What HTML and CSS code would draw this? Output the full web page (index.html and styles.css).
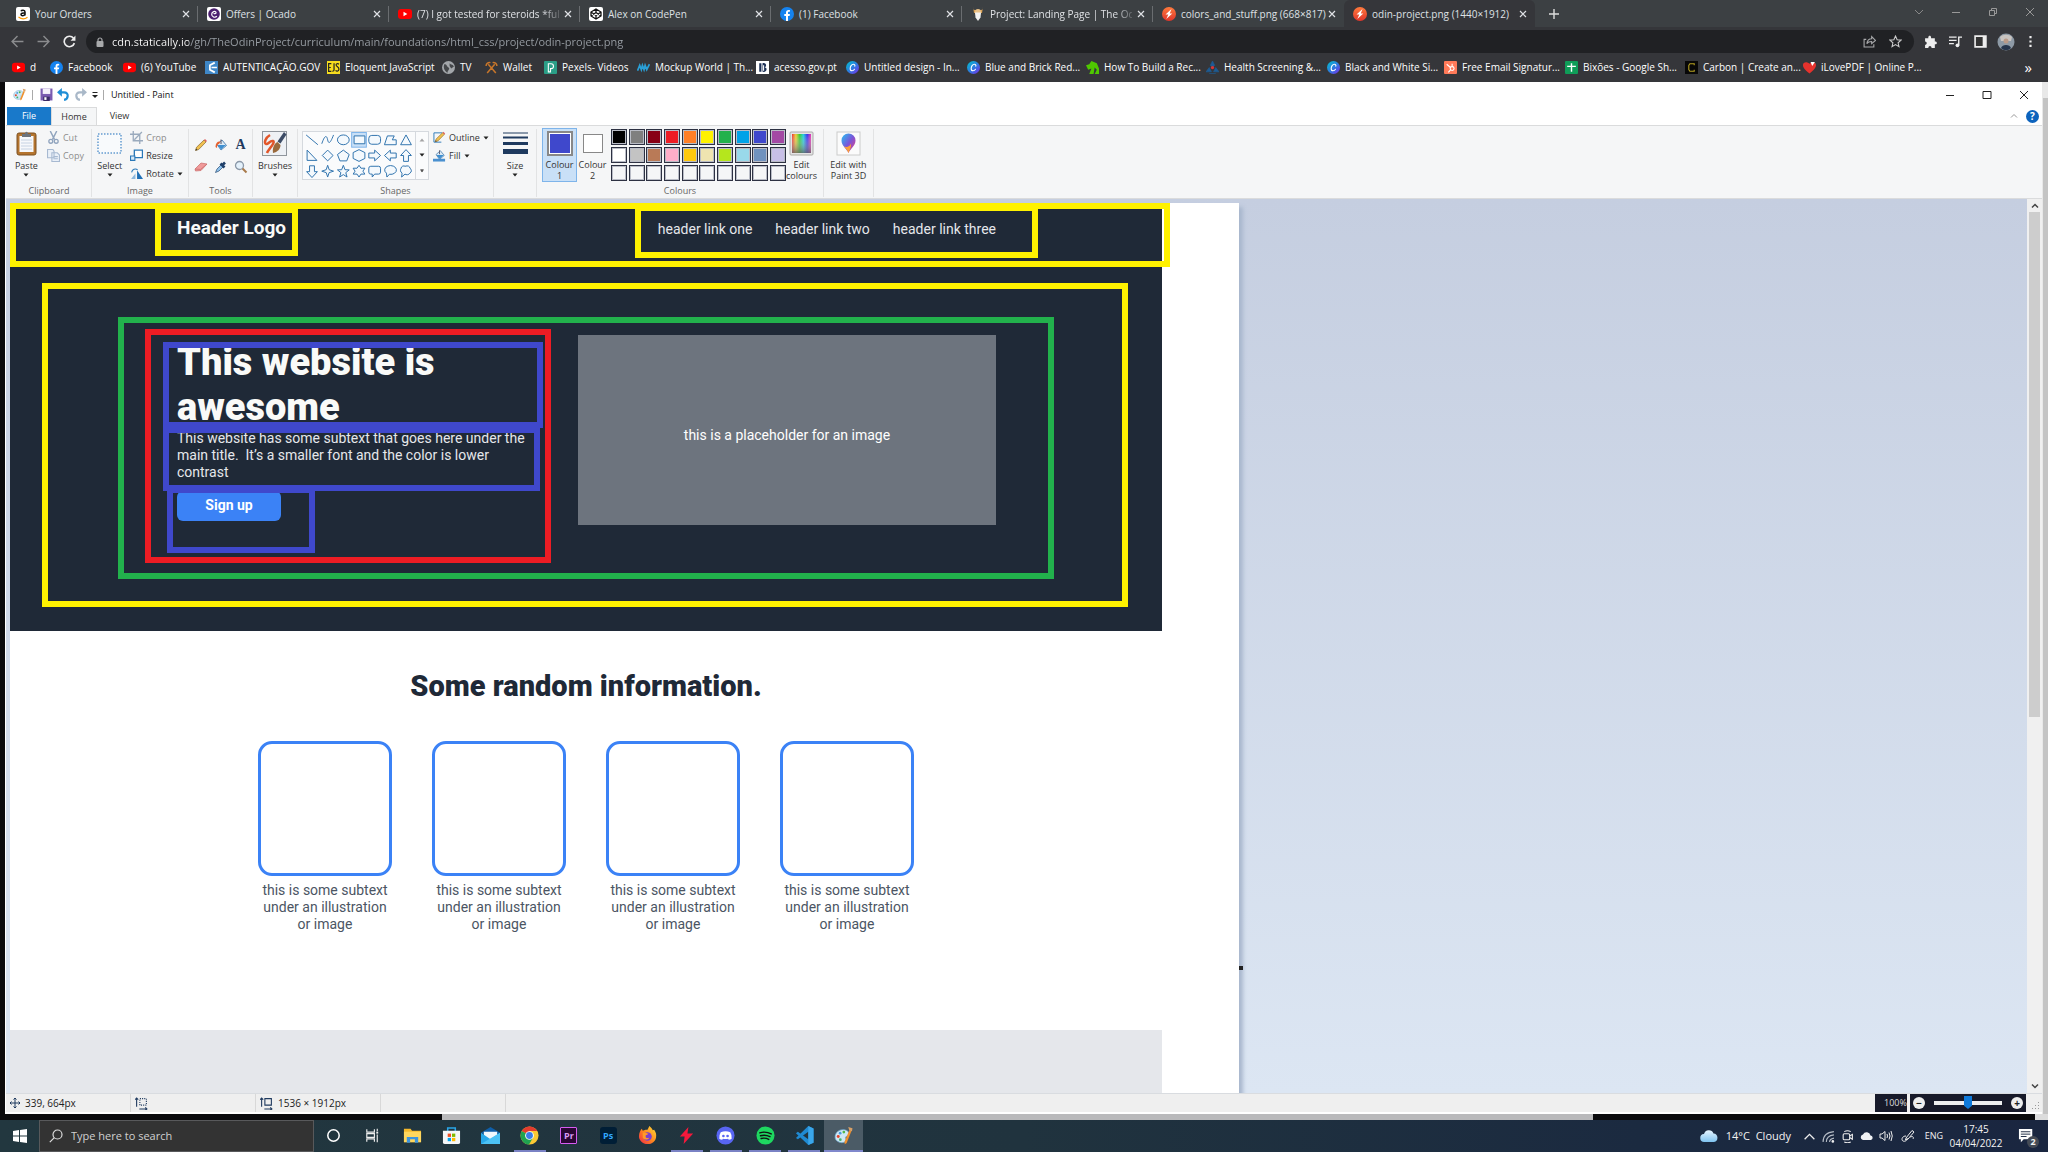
FILE: index.html
```html
<!DOCTYPE html>
<html lang="en">
<head>
<meta charset="utf-8">
<title>Untitled - Paint</title>
<link rel="stylesheet" href="styles.css">
</head>
<body>
<svg class="defs" aria-hidden="true">
  <defs>
    <linearGradient id="gCanva" x1="0" y1="0" x2="1" y2="1"><stop offset="0" stop-color="#00c4cc"/><stop offset=".5" stop-color="#2b7de0"/><stop offset="1" stop-color="#7d2ae8"/></linearGradient>
    <linearGradient id="gStat" x1="0" y1="0" x2="0" y2="1"><stop offset="0" stop-color="#ff7a3c"/><stop offset="1" stop-color="#e0352b"/></linearGradient>
    <linearGradient id="gRain"><stop offset="0" stop-color="#e33"/><stop offset=".2" stop-color="#ec3"/><stop offset=".4" stop-color="#3c3"/><stop offset=".6" stop-color="#2cd"/><stop offset=".8" stop-color="#33e"/><stop offset="1" stop-color="#e3a"/></linearGradient>
    <linearGradient id="gFade" x1="0" y1="0" x2="0" y2="1"><stop offset="0" stop-color="#fff" stop-opacity="0"/><stop offset="1" stop-color="#666" stop-opacity=".8"/></linearGradient>
    <linearGradient id="g3d" x1="0" y1="0" x2="1" y2="1"><stop offset="0" stop-color="#22c4f4"/><stop offset=".5" stop-color="#7a55d8"/><stop offset="1" stop-color="#f0407a"/></linearGradient>
    <linearGradient id="gFox" x1="1" y1="0" x2="0" y2="1"><stop offset="0" stop-color="#ffe03a"/><stop offset=".5" stop-color="#ff8a1e"/><stop offset="1" stop-color="#f0264a"/></linearGradient>
    <linearGradient id="gCloud" x1="0" y1="0" x2="0" y2="1"><stop offset="0" stop-color="#e6f5ff"/><stop offset="1" stop-color="#7fc3f0"/></linearGradient>
  </defs>
  <symbol id="yt" viewBox="0 0 14 14"><rect y="2" width="14" height="10" rx="3" fill="#f00"/><path d="M5.500 4.800v4.400L9.300 7z" fill="#fff"/></symbol>
  <symbol id="fb" viewBox="0 0 14 14"><circle cx="7" cy="7" r="7" fill="#1583f0"/><path d="M6 14V9H4.300V7H6V5.600C6 3.900 7 3 8.600 3l1.300.1v1.700H9c-.8 0-1 .4-1 1V7h1.900l-.3 2H8v5z" fill="#fff"/></symbol>
  <symbol id="canva" viewBox="0 0 14 14"><circle cx="7" cy="7" r="7" fill="url(#gCanva)"/><path d="M9.500 5.500c.3-1.200-.5-2-1.500-2C6 3.500 4.500 6 4.500 8c0 1.500.8 2.500 2 2.500 1.100 0 2-.6 2.600-1.600" fill="none" stroke="#fff" stroke-width="1.200" stroke-linecap="round"/></symbol>
  <symbol id="stat" viewBox="0 0 14 14"><circle cx="7" cy="7" r="7" fill="url(#gStat)"/><path d="M9.500 2 3.500 7.500H6.300L4.300 12l6-5.500H7.800z" fill="#fff"/></symbol>
  <symbol id="x" viewBox="0 0 8 8"><path d="M1 1l6 6M7 1 1 7" stroke="currentColor" stroke-width="1.200" fill="none"/></symbol>
  <symbol id="tri" viewBox="0 0 6 4"><path d="M.5.5h5L3 3.500z" fill="#222"/></symbol>
  <symbol id="palette" viewBox="0 0 18 18"><path d="M1 10.500C1 6 5 3 9.500 3.500c3.500.4 5.500 3 4.500 5-.7 1.400-2.500.8-3 2-.4 1.300.8 2.200.3 3.500-.6 1.800-4 2.200-6.300 1.300C2.600 14.500 1 13 1 10.500z" fill="#cfe8f5" stroke="#6fa9cf" stroke-width=".7"/><circle cx="4" cy="10" r="1.400" fill="#e0452c"/><circle cx="5.800" cy="6.800" r="1.300" fill="#4a9be0"/><circle cx="9.300" cy="5.800" r="1.300" fill="#52b848"/><circle cx="6" cy="13" r="1.300" fill="#46b36b"/><path d="M14.500 4l2 .7-4.500 11.300-1.800 1.300-.2-2.400z" fill="#f0902c"/><path d="M13.500 1l4 1.200L17 5l-2.500-.8z" fill="#d9a066"/></symbol>
  <symbol id="pencil" viewBox="0 0 14 14"><path d="M1.500 12.500l1-3.200L10 2l2 2-7.300 7.500z" fill="#f0c050" stroke="#8a6a30" stroke-width=".7"/><path d="M10 2l1-1 2 2-1 1z" fill="#e06060"/><path d="M1.500 12.500l.6-1.900 1.300 1.300z" fill="#333"/></symbol>
  <symbol id="bucket" viewBox="0 0 14 14"><path d="M3 6.500 8 2l4.500 5.500L7 12z" fill="#dbe9f5" stroke="#4a7fb0" stroke-width=".9"/><path d="M3.500 7h8.500L7 11.500z" fill="#3f8fd0"/><path d="M7 6V1.500" stroke="#556" fill="none"/></symbol>
</svg>

<div class="browser">
  <nav class="tabs" aria-label="Browser tabs">
    <div class="tab"><svg class="i14" viewBox="0 0 14 14"><rect width="14" height="14" rx="2" fill="#fff"/><path d="M5 4.300C5.500 3 9 2.800 9 5v3.500M9 6C6.500 5.800 5 6.200 5 7.600s3 1.500 4-.2" fill="none" stroke="#111" stroke-width="1.500"/><path d="M2.500 10c3 2.300 6.500 2.200 9 .2" fill="none" stroke="#f90" stroke-width="1.200"/></svg><span>Your Orders</span><button aria-label="Close tab"><svg class="i8"><use href="#x"/></svg></button></div>
    <div class="tab"><svg class="i14" viewBox="0 0 14 14"><rect width="14" height="14" rx="2" fill="#fff"/><circle cx="7" cy="7" r="5.800" fill="#4b1f6f"/><path d="M9.800 9.200C8.500 11 4.700 10.500 4.700 7.300 4.700 4.500 8.500 3.400 9 5.500c.2 1.500-2 1.600-2 .6" fill="none" stroke="#fff" stroke-width="1.200"/></svg><span>Offers | Ocado</span><button aria-label="Close tab"><svg class="i8"><use href="#x"/></svg></button></div>
    <div class="tab"><svg class="i14"><use href="#yt"/></svg><span class="long">(7) I got tested for steroids *full</span><button aria-label="Close tab"><svg class="i8"><use href="#x"/></svg></button></div>
    <div class="tab"><svg class="i14" viewBox="0 0 14 14"><rect width="14" height="14" rx="2" fill="#fff"/><path d="M7 2l5 3v4l-5 3-5-3V5zM2 5l5 3.500L12 5M2 9l5-3.500L12 9M7 2v3.500M7 8.500V12" fill="none" stroke="#111" stroke-width="1.300"/></svg><span>Alex on CodePen</span><button aria-label="Close tab"><svg class="i8"><use href="#x"/></svg></button></div>
    <div class="tab"><svg class="i14"><use href="#fb"/></svg><span>(1) Facebook</span><button aria-label="Close tab"><svg class="i8"><use href="#x"/></svg></button></div>
    <div class="tab"><svg class="i14" viewBox="0 0 14 14"><path d="M2 0c0 2 .5 3 2 3h6c1.500 0 2-1 2-3l-1 6H3z" fill="#d9a35a"/><circle cx="7" cy="5" r="3" fill="#e8c088"/><path d="M4 5.500h6l-.5 5L7 14l-2.500-3.500z" fill="#f2f2f2"/></svg><span class="long">Project: Landing Page | The Odin</span><button aria-label="Close tab"><svg class="i8"><use href="#x"/></svg></button></div>
    <div class="tab before-active"><svg class="i14"><use href="#stat"/></svg><span>colors_and_stuff.png (668×817)</span><button aria-label="Close tab"><svg class="i8"><use href="#x"/></svg></button></div>
    <div class="tab active"><svg class="i14"><use href="#stat"/></svg><span>odin-project.png (1440×1912)</span><button aria-label="Close tab"><svg class="i8"><use href="#x"/></svg></button></div>
    <button class="newtab" aria-label="New tab"><svg class="i10" viewBox="0 0 10 10"><path d="M5 0v10M0 5h10" stroke="#ddd" stroke-width="1.400"/></svg></button>
    <div class="winbtns">
      <button aria-label="Search tabs"><svg class="i10" viewBox="0 0 10 10"><path d="M1 3l4 4 4-4" fill="none" stroke="#888"/></svg></button>
      <button aria-label="Minimise"><svg class="i10" viewBox="0 0 10 10"><path d="M1 5.500h8" stroke="#999"/></svg></button>
      <button aria-label="Restore"><svg class="i10" viewBox="0 0 10 10"><path d="M1.500 3.500h5v5h-5zM3.500 3.500v-2h5v5h-2" fill="none" stroke="#999"/></svg></button>
      <button aria-label="Close"><svg class="i10" viewBox="0 0 10 10"><path d="M1 1l8 8M9 1 1 9" stroke="#999"/></svg></button>
    </div>
  </nav>
  <div class="toolbar">
    <button aria-label="Back"><svg class="i12" viewBox="0 0 12 12"><path d="M11.500 6H1M6 1 1 6l5 5" fill="none" stroke="#8b8c8e" stroke-width="1.300"/></svg></button>
    <button aria-label="Forward"><svg class="i12" viewBox="0 0 12 12"><path d="M.5 6H11M6 1l5 5-5 5" fill="none" stroke="#8b8c8e" stroke-width="1.300"/></svg></button>
    <button aria-label="Reload"><svg class="i12" viewBox="0 0 12 12"><path d="M10.500 7.500a4.800 4.800 0 1 1-.8-4.500" fill="none" stroke="#eee" stroke-width="1.500"/><path d="M11.500.5v4.700H7z" fill="#eee"/></svg></button>
    <div class="omnibox">
      <svg class="i10" viewBox="0 0 10 10"><rect x="1.500" y="4" width="7" height="6" rx="1" fill="#a8a9ab"/><path d="M3 4.500V3a2 2 0 0 1 4 0v1.500" fill="none" stroke="#a8a9ab" stroke-width="1.200"/></svg>
      <input type="text" aria-label="Address" value="cdn.statically.io/gh/TheOdinProject/curriculum/main/foundations/html_css/project/odin-project.png">
      <button aria-label="Share"><svg class="i12" viewBox="0 0 12 12"><path d="M3 4H1v7h9V8.500M3.500 8c.5-3 2-4.500 4.500-4.500V1.500L11.500 5 8 8V6C6 6 4.500 6.500 3.500 8z" fill="none" stroke="#a8a9ab"/></svg></button>
      <button aria-label="Bookmark"><svg class="i12" viewBox="0 0 12 12"><path d="M6 1l1.500 3.400 3.700.3-2.800 2.500.8 3.600L6 8.900l-3.200 1.900.8-3.600L.8 4.700l3.700-.3z" fill="none" stroke="#ccc"/></svg></button>
    </div>
    <div class="exts">
      <button aria-label="Extensions"><svg class="i12" viewBox="0 0 12 12"><path d="M1 3h3c-.5-3 3-3 2.500 0H10v3c2.500-.4 2.500 3 0 2.500V12H7c0-2.500-3-2.500-3 0H1V9c2 0 2-3 0-3z" fill="#eee"/></svg></button>
      <button aria-label="Media"><svg class="i12" viewBox="0 0 12 12"><path d="M0 2h7M0 5h7M0 8h4.500M9 9.500V2h3" fill="none" stroke="#eee" stroke-width="1.300"/><circle cx="7.800" cy="9.500" r="1.700" fill="#eee"/></svg></button>
      <button aria-label="Side panel"><svg class="i12" viewBox="0 0 12 12"><path d="M1 1h10v10H1z" fill="#333" stroke="#eee" stroke-width="1.500"/><path d="M8 1h3v10H8z" fill="#eee"/></svg></button>
      <button aria-label="Profile"><svg class="i18" viewBox="0 0 18 18"><circle cx="9" cy="9" r="8.500" fill="#8e9aa6"/><path d="M3 4c3-3 9-3 12 0l-1 4H4z" fill="#c9c4c0"/><circle cx="9" cy="8" r="2.500" fill="#b99a88"/><path d="M4 15c1-4 9-4 10 0-3 3-7 3-10 0z" fill="#27364d"/></svg></button>
      <button aria-label="Menu"><svg class="i12" viewBox="0 0 12 12"><path d="M6 1v2M6 5v2M6 9v2" stroke="#eee" stroke-width="2"/></svg></button>
    </div>
  </div>
  <nav class="bookmarks" aria-label="Bookmarks">
    <a href="#"><svg class="i12"><use href="#yt"/></svg>d</a>
    <a href="#"><svg class="i12"><use href="#fb"/></svg>Facebook</a>
    <a href="#"><svg class="i12"><use href="#yt"/></svg>(6) YouTube</a>
    <a href="#"><svg class="i12" viewBox="0 0 12 12"><rect width="12" height="12" fill="#3f87c8"/><path d="M9 1.500 4.500 4v4L9 10.500M6 6h5" fill="none" stroke="#fff" stroke-width="1.600"/></svg>AUTENTICAÇÃO.GOV</a>
    <a href="#"><svg class="i12" viewBox="0 0 12 12"><rect width="12" height="12" fill="#f7dc1e"/><path d="M4 2.500H1.500v7H4M1.500 6h2M6.500 2v6c0 1.500-1.500 1.500-1.500 1M11 3c-1-1-3-.5-2.500 1s2.800 1.500 2.500 3.700-2.500 1.800-3 .8" fill="none" stroke="#222" stroke-width="1.100"/></svg>Eloquent JavaScript</a>
    <a href="#"><svg class="i12" viewBox="0 0 12 12"><circle cx="6" cy="6" r="6" fill="#a3a6aa"/><path d="M2 3c3 0 2 2 4 3s-1 3-1 5C2 9 1 6 2 3zM7 1.500c0 2 3 1 4 3.500L8.500 7 7 4.500z" fill="#45474a"/></svg>TV</a>
    <a href="#"><svg class="i12" viewBox="0 0 12 12"><path d="M2 11l7-8M10 11 3 3M1 4.500C1 2 3 1 5 1.500M11 4.500C11 2 9 1 7 1.500" fill="none" stroke="#c8762a" stroke-width="1.400"/></svg>Wallet</a>
    <a href="#"><svg class="i12" viewBox="0 0 12 12"><rect width="12" height="12" rx="1" fill="#2b9e87"/><path d="M4 10V2.500h2.500a2 2 0 0 1 0 4.500H6v3z" fill="none" stroke="#fff"/></svg>Pexels- Videos</a>
    <a href="#"><svg class="i12" viewBox="0 0 12 12"><path d="M.5 9l2-5 1.500 4 1-4 1.500 4 1-4 1.500 4 2.500-5" fill="none" stroke="#2a9fd6" stroke-width="1.600"/></svg>Mockup World | Th...</a>
    <a href="#"><svg class="i12" viewBox="0 0 12 12"><rect width="12" height="12" fill="#fff"/><path d="M3 2h2v8H3zM6 2c4-1 4 3.500 2 4 3 0 2 5-2 4z" fill="#1b2f55"/><path d="M7 4v5" stroke="#fff"/></svg>acesso.gov.pt</a>
    <a href="#"><svg class="i12"><use href="#canva"/></svg>Untitled design - In...</a>
    <a href="#"><svg class="i12"><use href="#canva"/></svg>Blue and Brick Red...</a>
    <a href="#"><svg class="i12" viewBox="0 0 12 12"><path d="M0 4l3-1 2-3 5 2 2 5v5H8l2-4-2-2-1 6H3l2-5-3 1z" fill="#4fc800"/></svg>How To Build a Rec...</a>
    <a href="#"><svg class="i12" viewBox="0 0 12 12"><path d="M6 0l2 4-2 2-2-2zM0 10l3-4 2 4zM12 10 9 6l-2 4zM3 11.500h6" fill="#1e5b93" stroke="#1e5b93" stroke-width=".6"/><circle cx="6" cy="6" r="1.500" fill="#d33"/></svg>Health Screening &amp;...</a>
    <a href="#"><svg class="i12"><use href="#canva"/></svg>Black and White Si...</a>
    <a href="#"><svg class="i12" viewBox="0 0 12 12"><rect width="12" height="12" rx="1" fill="#ff7a59"/><circle cx="7.500" cy="7" r="1.800" fill="none" stroke="#fff"/><path d="M7.500 5V2.500M6 6 2.500 3M6 8.200 4 10.500" stroke="#fff"/></svg>Free Email Signatur...</a>
    <a href="#"><svg class="i12" viewBox="0 0 12 12"><rect width="12" height="12" rx="1" fill="#0f9d58"/><path d="M6 2v8M2 5h8" stroke="#fff" stroke-width="1.300"/></svg>Bixões - Google Sh...</a>
    <a href="#"><svg class="i12" viewBox="0 0 12 12"><rect width="12" height="12" fill="#080808"/><path d="M8.500 4V2.500h-4L3.500 4v4l1 1.500h4V8" fill="none" stroke="#b5a020"/></svg>Carbon | Create an...</a>
    <a href="#"><svg class="i12" viewBox="0 0 12 12"><path d="M6 11.500C0 7 0 5 0 3.500 0 1 3.500 0 6 2.500 8.500 0 12 1 12 3.500c0 1.500 0 3.500-6 8z" fill="#e5322d"/><path d="M7 1h4L8.500 4.500z" fill="#fff"/></svg>iLovePDF | Online P...</a>
    <button aria-label="More bookmarks">»</button>
  </nav>
</div>

<div class="desk">
<main class="paint">
  <header class="titlebar">
    <svg class="i12" ><use href="#palette"/></svg>
    <i class="sep"></i>
    <button aria-label="Save"><svg class="i12" viewBox="0 0 12 12"><path d="M.5.5h11v11H.5z" fill="#7a5bb0"/><path d="M2.500.5h7v5h-7z" fill="#f4f0fa"/><path d="M3 8h6v4H3z" fill="#3a2a66"/><path d="M4 8.500h2V11H4z" fill="#fff"/></svg></button>
    <button aria-label="Undo"><svg class="i12" viewBox="0 0 12 12"><path d="M2.500 4h4c5 0 4 6.500 0 7" fill="none" stroke="#1f8ed6" stroke-width="2"/><path d="M4.500 0v8L0 4z" fill="#1f8ed6"/></svg></button>
    <button aria-label="Redo"><svg class="i12" viewBox="0 0 12 12"><path d="M9.500 4h-4c-5 0-4 6.500 0 7" fill="none" stroke="#a9b8c8" stroke-width="2"/><path d="M7.500 0v8L12 4z" fill="#a9b8c8"/></svg></button>
    <button aria-label="Customise toolbar"><svg class="i8" viewBox="0 0 8 8"><path d="M1.500 1.500h5" stroke="#222"/><path d="M1 4h6L4 7z" fill="#222"/></svg></button>
    <i class="sep"></i>
    <h1 class="wintitle">Untitled - Paint</h1>
    <div class="paintbtns">
      <button aria-label="Minimise"><svg class="i10" viewBox="0 0 10 10"><path d="M1 5.500h8" stroke="#222"/></svg></button>
      <button aria-label="Maximise"><svg class="i10" viewBox="0 0 10 10"><path d="M1 1.500h8v7H1z" fill="none" stroke="#222"/></svg></button>
      <button aria-label="Close"><svg class="i10" viewBox="0 0 10 10"><path d="M1 1l8 8M9 1 1 9" stroke="#222"/></svg></button>
    </div>
  </header>
  <div class="ribbontabs">
    <button class="file">File</button><button class="home">Home</button><button class="view">View</button>
    <div class="help">
      <button aria-label="Collapse ribbon"><svg class="i8" viewBox="0 0 8 8"><path d="M1 5.500l3-3 3 3" fill="none" stroke="#999"/></svg></button>
      <button class="q" aria-label="Help">?</button>
    </div>
  </div>
  <div class="ribbon">
    <section class="group g-clip">
      <div class="body">
        <button class="big"><svg class="i25" viewBox="0 0 25 25"><rect x="3" y="2" width="19" height="22" rx="2" fill="#b5752e" stroke="#7d5122"/><path d="M5.500 5h14v16h-14z" fill="#f6f8fb"/><path d="M7 9h11M7 12h11M7 15h11M7 18h11" stroke="#c6d2e2"/><path d="M8 6V3h3c0-3 3-3 3 0h3v3z" fill="#6d737c"/></svg><span>Paste</span><svg class="tri"><use href="#tri"/></svg></button>
        <div class="smalls two">
          <button class="off"><svg class="i12" viewBox="0 0 12 12"><path d="M3 0l4 8M9 0 5 8" stroke="#8fa3bd" stroke-width="1.300"/><circle cx="3.500" cy="9.500" r="1.800" fill="none" stroke="#8fa3bd" stroke-width="1.200"/><circle cx="8.500" cy="9.500" r="1.800" fill="none" stroke="#8fa3bd" stroke-width="1.200"/></svg>Cut</button>
          <button class="off"><svg class="i12" viewBox="0 0 12 12"><path d="M.5.500h5l1 1.500v6h-6zM4.500 3.500h5l2 2v6h-7z" fill="#eaf0f8" stroke="#a7b9d1"/><path d="M6 7h4M6 9h4" stroke="#a7b9d1"/></svg>Copy</button>
        </div>
      </div><h2>Clipboard</h2>
    </section>
    <section class="group g-image">
      <div class="body">
        <button class="big"><svg class="i25" viewBox="0 0 25 25"><rect x="1" y="3" width="23" height="19" fill="#f8fafc" stroke="#1a6dbb" stroke-dasharray="1.500 1.500"/></svg><span>Select</span><svg class="tri"><use href="#tri"/></svg></button>
        <div class="smalls">
          <button class="off"><svg class="i12" viewBox="0 0 12 12"><path d="M3 0v9h9M0 3h9v9M4 8l7-7" fill="none" stroke="#9aaabd" stroke-width="1.200"/></svg>Crop</button>
          <button><svg class="i12" viewBox="0 0 12 12"><path d="M4 1h7.500v7H4z" fill="#fff" stroke="#2a78b8" stroke-width="1.200"/><path d="M.5 6.500h4v4h-4z" fill="#d7e9f8" stroke="#2a78b8"/></svg>Resize</button>
          <button><svg class="i12" viewBox="0 0 12 12"><path d="M6.500 11V3l5.500 8z" fill="#1f6fb5"/><path d="M5 11V6L1 11z" fill="#8db8dd"/><path d="M1.500 5C2 2 5 1 7 2.500" fill="none" stroke="#2a78b8"/></svg>Rotate<svg class="tri"><use href="#tri"/></svg></button>
        </div>
      </div><h2>Image</h2>
    </section>
    <section class="group g-tools">
      <div class="body tools">
        <button aria-label="Pencil"><svg class="i14"><use href="#pencil"/></svg></button>
        <button aria-label="Fill with colour"><svg class="i14" viewBox="0 0 14 14"><use href="#bucket"/><path d="M1.500 9c0-4 2-6 5-5.500L5 6C3.500 6 3 8 3 10z" fill="#e8602c"/></svg></button>
        <button aria-label="Text" class="letter">A</button>
        <button aria-label="Eraser"><svg class="i14" viewBox="0 0 14 14"><path d="M1 9l6-6 6 1-6 6.500-5.500.5z" fill="#f09a9a" stroke="#c86a6a" stroke-width=".7"/><path d="M1 9l5.500.5L13 4" fill="none" stroke="#c86a6a" stroke-width=".7"/></svg></button>
        <button aria-label="Colour picker"><svg class="i14" viewBox="0 0 14 14"><path d="M1.500 12.500 3 9l4-4 2 2-4 4z" fill="#8fc4ee" stroke="#3a5a80" stroke-width=".8"/><path d="M6.500 3.500l4 4M8.500 5 11 2.500" stroke="#20406a" stroke-width="2.600"/></svg></button>
        <button aria-label="Magnifier"><svg class="i14" viewBox="0 0 14 14"><circle cx="5.500" cy="5.500" r="4" fill="#e4f1fb" stroke="#8b98a8" stroke-width="1.300"/><path d="M8.500 8.500l4 4" stroke="#a87a4a" stroke-width="2"/></svg></button>
      </div><h2>Tools</h2>
    </section>
    <section class="group g-brush">
      <div class="body">
        <button class="big"><svg class="i25" viewBox="0 0 25 25"><rect x=".5" y=".5" width="24" height="24" fill="#eef1f5" stroke="#8f959c"/><path d="M8 4c-5 3-6 8-4 9s4-4 7-3-5 9-6 12" fill="none" stroke="#e2562a" stroke-width="2.500"/><path d="M22 1l2.500 2.500-6 9-3-2z" fill="#3d4c66"/><path d="M11 22c-1-6 2-10 4.500-11l3 3c0 4-3 7-7.500 8z" fill="#9a6a3c"/></svg><span>Brushes</span><svg class="tri"><use href="#tri"/></svg></button>
      </div>
    </section>
    <section class="group g-shapes">
      <div class="body">
        <div class="gallery">
          <svg class="shapes" viewBox="0 0 112 48" fill="#f4f9fd" stroke="#2f73ad">
            <rect x="48.500" y=".5" width="15" height="15" fill="#c9e0f7" stroke="#7eb4ea"/>
            <path d="M2 3l12 10"/><path d="M18 12c3-9 5-9 6-4s3 3 6-5" fill="none"/><ellipse cx="40" cy="8" rx="6" ry="5"/><path d="M51 4h11v8H51z"/><rect x="66" y="3.500" width="12" height="9" rx="3"/><path d="M85 4h7l-2 4h4v5H82z"/><path d="M104 3l5.500 10h-11z"/>
            <path d="M3 18.500V29h10z"/><path d="M24 18.500l5.500 5.500-5.500 5.500-5.500-5.500z"/><path d="M40 18.500l6 4.500-2.500 6.500h-7L34 23z"/><path d="M56 18l6 3v6l-6 3-6-3v-6z"/><path d="M66 21.500h6v-3l6 5.500-6 5.500v-3h-6z"/><path d="M94 21.500h-6v-3L82 24l6 5.500v-3h6z"/><path d="M101.500 30v-6h-3l5.500-6 5.500 6h-3v6z"/>
            <path d="M5.500 34.500v6h-3l5.500 6 5.500-6h-3v-6z"/><path d="M24 34l1.500 4.500L30 40l-4.500 1.500L24 46l-1.500-4.500L18 40l4.500-1.500z"/><path d="M40 34l1.700 4.500 4.300.2-3.500 2.800 1.300 4.500L40 43.500 36.200 46l1.300-4.500-3.500-2.800 4.300-.2z"/><path d="M56 34l2 3h4l-2 3 2 3h-4l-2 3-2-3h-4l2-3-2-3h4z"/><path d="M68 35h8q2 0 2 2v4q0 2-2 2h-4l-2.500 3v-3H68q-2 0-2-2v-4q0-2 2-2z"/><path d="M84 42a6 4.500 0 1 1 3 1.200L84.500 46z"/><path d="M99 37c0-2 3-3 4-2 3-1 5 0 5 2 2 1 2 4 0 5-1 2-4 2-5 1l-3.500 3 .5-4c-2-1-2-4-1-5z"/>
          </svg>
          <div class="scroller"><svg class="tri up"><use href="#tri"/></svg><svg class="tri"><use href="#tri"/></svg><svg class="tri" viewBox="0 0 6 6"><path d="M.5.5h5" stroke="#222"/><path d="M.5 2h5L3 5z" fill="#222"/></svg></div>
        </div>
        <div class="smalls two">
          <button><svg class="i12" viewBox="0 0 14 14"><path d="M1 2h9M1 2v10h8" fill="none" stroke="#2a78b8"/><use href="#pencil" x="1" y="0" width="13" height="13"/></svg>Outline<svg class="tri"><use href="#tri"/></svg></button>
          <button><svg class="i12" viewBox="0 0 14 14"><path d="M0 12h13" stroke="#4a90d0" stroke-width="3"/><use href="#bucket" width="14" height="13"/></svg>Fill<svg class="tri"><use href="#tri"/></svg></button>
        </div>
      </div><h2>Shapes</h2>
    </section>
    <section class="group g-size">
      <div class="body">
        <button class="big"><svg class="i25" viewBox="0 0 25 25"><path d="M0 2h25" stroke="#1f3a5f"/><path d="M0 6.500h25" stroke="#1f3a5f" stroke-width="2"/><path d="M0 12.500h25" stroke="#1f3a5f" stroke-width="3"/><path d="M0 20.500h25" stroke="#1f3a5f" stroke-width="5"/></svg><span>Size</span><svg class="tri"><use href="#tri"/></svg></button>
      </div>
    </section>
    <section class="group g-col">
      <div class="body">
        <button class="big col picked"><i class="chip c-blue large"></i><span>Colour<br>1</span></button>
        <button class="big col"><i class="chip c-white"></i><span>Colour<br>2</span></button>
        <div class="palette">
          <i class="c-black"></i><i class="c-grey"></i><i class="c-maroon"></i><i class="c-red"></i><i class="c-orange"></i><i class="c-yellow"></i><i class="c-green"></i><i class="c-sky"></i><i class="c-blue"></i><i class="c-purple"></i>
          <i class="c-white"></i><i class="c-silver"></i><i class="c-brown"></i><i class="c-pink"></i><i class="c-gold"></i><i class="c-cream"></i><i class="c-lime"></i><i class="c-aqua"></i><i class="c-steel"></i><i class="c-lilac"></i>
          <i></i><i></i><i></i><i></i><i></i><i></i><i></i><i></i><i></i><i></i>
        </div>
        <button class="big edit"><svg class="i25" viewBox="0 0 25 25"><rect x="1" y="1" width="23" height="23" rx="1" fill="#e4e4e4" stroke="#aaa"/><path d="M3 3h19v19H3z" fill="url(#gRain)"/><path d="M3 3h19v19H3z" fill="url(#gFade)"/></svg><span>Edit<br>colours</span></button>
      </div><h2>Colours</h2>
    </section>
    <section class="group g-3d">
      <div class="body">
        <button class="big"><svg class="i25" viewBox="0 0 25 25"><rect x="1" y="1" width="23" height="23" fill="#fbfbfb" stroke="#ccc"/><path d="M12.500 22C11 18 5.500 15 5.500 9.500a7 7 0 0 1 14 0C19.500 15 14 18 12.500 22z" fill="url(#g3d)"/><path d="M12.500 22c-1-3-3-4.500-4.500-6.500 3 1 6 0 7-3 .5 4-1.500 6.500-2.500 9.500z" fill="#f9a03a"/></svg><span>Edit with<br>Paint 3D</span></button>
      </div>
    </section>
  </div>

  <div class="work">
    <div class="stage">
      <div class="paper">
        <article class="art">
          <div class="dark">
            <div class="site-head">
              <strong>Header Logo</strong>
              <nav><a href="#">header link one</a><a href="#">header link two</a><a href="#">header link three</a></nav>
            </div>
            <div class="hero">
              <div class="copy">
                <h2>This website is awesome</h2>
                <p>This website has some subtext that goes here under the main title.&nbsp; It’s a smaller font and the color is lower contrast</p>
                <button>Sign up</button>
              </div>
              <div class="ph">this is a placeholder for an image</div>
            </div>
          </div>
          <section class="info">
            <h2>Some random information.</h2>
            <div class="cards">
              <figure><div class="box"></div><figcaption>this is some subtext under an illustration or image</figcaption></figure>
              <figure><div class="box"></div><figcaption>this is some subtext under an illustration or image</figcaption></figure>
              <figure><div class="box"></div><figcaption>this is some subtext under an illustration or image</figcaption></figure>
              <figure><div class="box"></div><figcaption>this is some subtext under an illustration or image</figcaption></figure>
            </div>
          </section>
          <div class="quote"></div>
        </article>
        <i class="mark yellow m-head"></i><i class="mark yellow m-logo"></i><i class="mark yellow m-nav"></i><i class="mark yellow m-hero"></i>
        <i class="mark green m-row"></i><i class="mark red m-copy"></i><i class="mark blue m-title"></i><i class="mark blue m-sub"></i><i class="mark blue m-btn"></i>
        <i class="handle"></i>
      </div>
    </div>
    <div class="vscroll">
      <svg class="i8" viewBox="0 0 8 8"><path d="M1 5.500l3-3 3 3" fill="none" stroke="#444" stroke-width="1.500"/></svg>
      <div class="track"><div class="thumb"></div></div>
      <svg class="i8" viewBox="0 0 8 8"><path d="M1 2.500l3 3 3-3" fill="none" stroke="#444" stroke-width="1.500"/></svg>
    </div>
  </div>

  <footer class="status">
    <div class="cell"><svg class="i10" viewBox="0 0 10 10"><path d="M5 0v10M0 5h10M3.500 1.500 5 0l1.500 1.500M3.500 8.500 5 10l1.500-1.500M1.500 3.500 0 5l1.500 1.500M8.500 3.500 10 5 8.500 6.500" fill="none" stroke="#1f3a5f"/></svg>339, 664px</div>
    <div class="cell"><svg class="i12" viewBox="0 0 12 12"><path d="M1.500 1v8M0 2.500 1.500 1 3 2.500M4 11h7M9.500 9.500 11 11l-1.500 1.500" fill="none" stroke="#1f3a5f"/><path d="M4.500 1.500h6v6h-6z" fill="none" stroke="#1f3a5f" stroke-dasharray="1 1"/></svg></div>
    <div class="cell"><svg class="i12" viewBox="0 0 12 12"><path d="M1.500 1v8M0 2.500 1.500 1 3 2.500M4 11h7M9.500 9.500 11 11l-1.500 1.500M4.500 1.500h6v6h-6z" fill="none" stroke="#1f3a5f"/></svg>1536 × 1912px</div>
    <div class="cell"></div>
    <div class="pct">100%</div>
    <div class="zoom">
      <button aria-label="Zoom out">−</button>
      <input type="range" min="0" max="100" value="50" aria-label="Zoom">
      <button aria-label="Zoom in">+</button>
    </div>
    <svg class="grip" viewBox="0 0 8 8"><path d="M6 0h1v1H6zM6 3h1v1H6zM6 6h1v1H6zM3 3h1v1H3zM3 6h1v1H3zM0 6h1v1H0z" fill="#999"/></svg>
  </footer>
</main>
<div class="backscroll"><div class="backthumb"></div></div>
</div>
<div class="hscroll"><i class="hdark"></i><i class="hthumb"></i><i class="hdark2"></i></div>

<footer class="taskbar">
  <button class="start" aria-label="Start"><svg class="i14" viewBox="0 0 14 14"><path d="M0 2l6-.9v5.400H0zM7 1l7-1v6.500H7zM0 7.500h6v5.400L0 12zM7 7.500h7V14l-7-1z" fill="#fff"/></svg></button>
  <label class="search"><svg class="i14" viewBox="0 0 14 14"><circle cx="8.500" cy="5.500" r="4.500" fill="none" stroke="#ddd" stroke-width="1.200"/><path d="M5.300 8.700.8 13.200" stroke="#ddd" stroke-width="1.200"/></svg><input type="text" aria-label="Search" placeholder="Type here to search"></label>
  <div class="apps">
    <button aria-label="Cortana"><svg class="i20" viewBox="0 0 20 20"><circle cx="10" cy="10" r="6" fill="none" stroke="#fff" stroke-width="1.600"/></svg></button>
    <button aria-label="Task view"><svg class="i20" viewBox="0 0 20 20"><path d="M4 3.500v3h8v-3M4 16.500v-3h8v3M4 8h8v4H4zM15 3v2.500M15 9v8" fill="none" stroke="#eee" stroke-width="1.200"/><path d="M14 6h2v2h-2z" fill="#eee"/></svg></button>
    <button aria-label="File Explorer"><svg class="i20" viewBox="0 0 20 20"><path d="M1 3h7l1.500 2H19v12H1z" fill="#f5b92c"/><path d="M1 6h18v11H1z" fill="#ffd75e"/><path d="M4 17.500v-6h12v6h-3.500V14h-5v3.500z" fill="#3d94de"/></svg></button>
    <button aria-label="Microsoft Store"><svg class="i20" viewBox="0 0 20 20"><path d="M6 6V2h8v4" fill="none" stroke="#2aa6e8" stroke-width="1.600"/><path d="M1 5h18v12q0 2-2 2H3q-2 0-2-2z" fill="#f4f6f8"/><path d="M6 8h3.500v3.500H6z" fill="#f25022"/><path d="M10.500 8H14v3.500h-3.500z" fill="#7fba00"/><path d="M6 12.500h3.500V16H6z" fill="#00a4ef"/><path d="M10.500 12.500H14V16h-3.500z" fill="#ffb900"/></svg></button>
    <button aria-label="Mail"><svg class="i20" viewBox="0 0 20 20"><path d="M0 7l10-6 10 6-10 6z" fill="#0f5ea8"/><path d="M3 6h14v6l-7 3-7-3z" fill="#f2f8fd"/><path d="M0 7l10 7 10-7v12H0z" fill="#28a8ea"/><path d="M0 19l20-12v12z" fill="#4cc2f5"/></svg></button>
    <button class="on" aria-label="Chrome"><svg class="i20" viewBox="0 0 20 20"><circle cx="10" cy="10" r="9.500" fill="#fcc934"/><path d="M10 10 1.800 5.300A9.500 9.500 0 0 1 18.200 5.300H10z" fill="#e33b2e"/><path d="M10 10 1.800 5.300A9.500 9.500 0 0 0 9.500 19.500l4-7z" fill="#1fa351"/><circle cx="10" cy="10" r="4.600" fill="#fff"/><circle cx="10" cy="10" r="3.600" fill="#3b7de8"/></svg></button>
    <button aria-label="Premiere Pro"><span class="adobe pr">Pr</span></button>
    <button aria-label="Photoshop"><span class="adobe ps">Ps</span></button>
    <button aria-label="Firefox"><svg class="i20" viewBox="0 0 20 20"><path d="M1 11C1 7 3 4 4 3l1 2c2-1 4-1 5-1l2-4c2 2 3 3 3.500 4.500L17 4c2 3 2.500 5 2 8-.8 4-4 7-9 7s-9-4-9-8z" fill="url(#gFox)"/><circle cx="10" cy="11" r="4.500" fill="#7a3fd0"/><path d="M5 7c3-1 4 1 6 1-1 2-3 1-3 3s3 2 4 1c-1 3-6 3-7 0z" fill="#ff9a2a"/></svg></button>
    <button class="on" aria-label="Thunder client"><svg class="i20" viewBox="0 0 20 20"><path d="M12 1 3 11h5l-1 8L17 8h-6z" fill="#f5193c"/></svg></button>
    <button class="on" aria-label="Discord"><svg class="i20" viewBox="0 0 20 20"><circle cx="10" cy="10" r="9.500" fill="#5865f2"/><path d="M5 6.500q5-2 10 0 2 3 1.500 7-1.500 1-3 1l-.8-1q-2.700.6-5.400 0l-.8 1q-1.500 0-3-1Q3 9.500 5 6.500z" fill="#fff"/><circle cx="7.800" cy="10.500" r="1.400" fill="#5865f2"/><circle cx="12.200" cy="10.500" r="1.400" fill="#5865f2"/></svg></button>
    <button class="on" aria-label="Spotify"><svg class="i20" viewBox="0 0 20 20"><circle cx="10" cy="10" r="9.500" fill="#1ed760"/><path d="M4 7.200c4-1.200 8.500-.8 12 1.200M4.700 10.300c3.500-1 7-.6 10 1M5.400 13.200c3-.8 5.500-.5 8 .9" fill="none" stroke="#111" stroke-width="1.500" stroke-linecap="round"/></svg></button>
    <button class="on" aria-label="Visual Studio Code"><svg class="i20" viewBox="0 0 20 20"><path d="M14 0l5.500 2.500v15L14 20 1 7.500 3 6l11 8V6L3 14l-2-1.500z" fill="#1f8ad2"/><path d="M14 0l5.500 2.500v15L14 20z" fill="#3aa6ea"/></svg></button>
    <button class="on current" aria-label="Paint"><svg class="i20"><use href="#palette"/></svg></button>
  </div>
  <div class="tray">
    <button class="weather"><svg class="i18" viewBox="0 0 18 18"><path d="M4.500 15a4 4 0 0 1-.5-8 5 5 0 0 1 9.500-.5A4.300 4.300 0 0 1 14 15z" fill="url(#gCloud)"/></svg>14°C&nbsp; Cloudy</button>
    <button aria-label="Hidden icons"><svg class="i12" viewBox="0 0 12 12"><path d="M1.500 8.500 6 4l4.500 4.500" fill="none" stroke="#eee" stroke-width="1.200"/></svg></button>
    <button aria-label="Network"><svg class="i12" viewBox="0 0 12 12"><path d="M1 11C1 5 5 2 11 1.500M4 11c0-4 3-6 7-6.500M7 11c0-2 1.500-3 4-3.500" fill="none" stroke="#b5bcc6"/><circle cx="10" cy="10.500" r="1.200" fill="#eee"/></svg></button>
    <button aria-label="Meet now"><svg class="i12" viewBox="0 0 12 12"><rect x="2" y="3.500" width="6" height="5.500" rx="1" fill="none" stroke="#eee"/><path d="M8 5.500 10.500 4v4.500L8 7M3 1.500q3-1.500 6 0M3 11q3 1.500 6 0" fill="none" stroke="#eee"/></svg></button>
    <button aria-label="OneDrive"><svg class="i14" viewBox="0 0 14 14"><path d="M3 11a2.800 2.800 0 0 1 0-5.500 4 4 0 0 1 7.500 1A2.300 2.300 0 0 1 11 11z" fill="#f0f2f5"/></svg></button>
    <button aria-label="Volume"><svg class="i14" viewBox="0 0 14 14"><path d="M1 5h2l3-2.500v9L3 9H1zM8 5q1 2 0 4M10 3.500q2 3.500 0 7M12 2q2.500 5 0 10" fill="none" stroke="#eee"/></svg></button>
    <button class="pen" aria-label="Pen"><svg class="i14" viewBox="0 0 14 14"><path d="M5 9 11 1.500l2 1.500L7 10l-2.500 1zM5 7C1 7 0 11 2 12s5-1 4-3M9 8c3-1 4 0 3 2" fill="none" stroke="#eee"/></svg></button>
    <button class="lang">ENG</button>
    <button class="clock">17:45<br>04/04/2022</button>
    <button class="notif" aria-label="Notifications"><svg class="i20" viewBox="0 0 20 20"><path d="M1 2h14v11H6l-3 3v-3H1z" fill="#fff"/><path d="M3 5h10M3 7.500h10M3 10h6" stroke="#1d2a42"/></svg><b>2</b></button>
  </div>
</footer>
</body>
</html>
```

FILE: styles.css
```css
* { box-sizing: border-box; }
html, body { height: 100%; }
body { margin: 0; min-height: 100vh; display: flex; flex-direction: column; overflow: hidden; background: #0b0b0d; font: 10px/14px "Open Sans", "Noto Sans", sans-serif; color: #333; }
button { border: 0; padding: 0; margin: 0; background: none; font: inherit; color: inherit; display: flex; align-items: center; justify-content: center; }
a { color: inherit; text-decoration: none; }
h1, h2, p, figure { margin: 0; font: inherit; }
svg { display: block; flex: none; }
.defs { position: absolute; width: 0; height: 0; }
.i8 { width: 8px; height: 8px; }
.i10 { width: 10px; height: 10px; }
.i12 { width: 13px; height: 13px; }
.i14 { width: 14px; height: 14px; }
.i18 { width: 18px; height: 18px; }
.i20 { width: 19px; height: 19px; }
.i25 { width: 25px; height: 25px; }
.tri { width: 6px; height: 4px; }

/* Browser chrome */
.browser { flex: none; background: #35363a; color: #dfe1e5; }
.tabs { display: flex; height: 27px; padding-left: 7px; background: #3c4043; }
.tab { display: flex; align-items: center; gap: 5px; flex: 0 1 191px; min-width: 0; padding: 0 8px 0 9px; position: relative; }
.tab::after { content: ""; position: absolute; right: 0; top: 6px; width: 1px; height: 16px; background: #6a6d70; }
.tab.active::after, .tab.before-active::after { display: none; }
.tab.active { background: #35363a; border-radius: 6px 6px 0 0; }
.tab span { flex: 1; min-width: 0; white-space: nowrap; }
.tab .long { -webkit-mask-image: linear-gradient(90deg, #000 88%, transparent 104%); mask-image: linear-gradient(90deg, #000 88%, transparent 104%); }
.newtab { width: 38px; }
.winbtns { margin-left: auto; display: flex; padding-bottom: 4px; }
.winbtns button { width: 37px; }
.toolbar { display: flex; align-items: center; height: 26px; padding: 3px 5px 0 4px; }
.toolbar > button { width: 26px; }
.omnibox { flex: 1; display: flex; align-items: center; height: 23px; margin-left: 4px; padding: 0 6px 0 9px; background: #202124; border-radius: 12px; }
.omnibox input { flex: 1; min-width: 0; margin-left: 7px; padding: 0; border: 0; outline: 0; font: inherit; font-size: 11px; color: transparent; background: linear-gradient(90deg, #fff 77px, #9aa0a6 77px); -webkit-background-clip: text; background-clip: text; }
.omnibox button { width: 26px; }
.exts { display: flex; padding-left: 4px; }
.exts button { width: 25px; height: 20px; }
.bookmarks { display: grid; grid-template-columns: 38px 73px 82px 122px 115px 43px 59px 93px 119px 90px 121px 119px 120px 121px 117px 121px 120px 118px 120px 1fr; align-items: center; height: 29px; padding: 0 10px 1px 12px; color: #fff; white-space: nowrap; }
.bookmarks a { display: flex; align-items: center; gap: 5px; }
.bookmarks button { justify-self: end; margin-right: 6px; font-size: 15px; }

/* Paint window */
.desk { flex: 1; min-height: 0; display: flex; padding-left: 5px; }
.paint { flex: 1; min-width: 0; display: flex; flex-direction: column; padding-left: 1px; background: #fff; }
.backscroll { width: 6px; padding: 16px 0 0 1px; background: #e8e8e8; }
.backthumb { height: 100%; background: #c4c4c4; }
.titlebar { display: flex; align-items: center; height: 25px; padding: 0 0 0 7px; color: #111; }
.titlebar > svg { margin-right: 6px; }
.titlebar > button { margin-right: 4px; }
.sep { width: 1px; height: 10px; margin-right: 7px; background: #aaa; }
.wintitle { font-size: 9px; }
.paintbtns { margin-left: auto; display: flex; }
.paintbtns button { width: 37px; height: 22px; }
.ribbontabs { display: flex; height: 18px; padding-left: 1px; font-size: 9px; }
.ribbontabs > button { height: 18px; width: 45px; }
.ribbontabs .file { width: 44px; background: #1979ca; color: #fff; }
.ribbontabs .home { width: 46px; background: #f5f6f7; border: 1px solid #dadbdc; border-bottom: 0; }
.help { margin-left: auto; display: flex; align-items: center; gap: 8px; padding-right: 3px; }
.q { width: 13px; height: 13px; border-radius: 50%; background: #0c63bd; color: #fff; font-weight: 700; font-size: 10px; }
.ribbon { display: flex; height: 74px; padding: 3px 0 1px 1px; background: #f5f6f7; border-top: 1px solid #dadbdc; border-bottom: 1px solid #dadbdc; font-size: 9px; line-height: 11px; }
.group { display: flex; flex-direction: column; border-right: 1px solid #e2e3e4; }
.group .body { flex: 1; display: flex; justify-content: center; }
.group h2 { height: 12px; text-align: center; color: #666; }
.g-clip { width: 85px; } .g-image { width: 97px; } .g-tools { width: 64px; } .g-brush { width: 45px; }
.g-shapes { width: 196px; } .g-size { width: 43px; } .g-col { width: 287px; } .g-3d { width: 50px; }
.big { flex-direction: column; justify-content: flex-start; height: 52px; padding-top: 2px; }
.big span { margin-top: 4px; height: 13px; }
.big.col span, .g-3d .big span, .edit span { height: auto; margin-top: 3px; }
.smalls { display: flex; flex-direction: column; justify-content: space-between; height: 52px; margin-left: 8px; padding: 1px 0 0; }
.smalls.two { justify-content: flex-start; gap: 3px; }
.smalls button { justify-content: flex-start; gap: 3px; height: 15px; }
.off { color: #8d8d8d; }
.tools { display: grid !important; grid-template-columns: repeat(3, 20px); grid-template-rows: 22px 22px; padding-top: 5px; }
.letter { font: bold 14px "Liberation Serif", serif; color: #1f3a5f; }
.gallery { display: flex; width: 127px; height: 49px; margin-top: 2px; border: 1px solid #d5d9de; background: #fafbfc; }
.shapes { width: 112px; height: 47px; }
.scroller { flex: 1; display: flex; flex-direction: column; align-items: center; justify-content: space-around; border-left: 1px solid #d5d9de; }
.up { transform: rotate(180deg); opacity: .4; }
.g-shapes .smalls { margin-left: 4px; }
.col { width: 33px; }
.picked { background: #c9e0f7; outline: 1px solid #7eb4ea; }
.chip { width: 20px; height: 20px; margin: 3px; border: 1px solid #888; box-shadow: inset 0 0 0 1px #fff; }
.chip.large { width: 26px; height: 26px; margin: 0; border-width: 2px; }
.palette { display: grid; grid-template-columns: repeat(10, 16px); grid-auto-rows: 16px; justify-content: space-between; align-content: space-between; width: 175px; height: 52px; margin: 0 0 0 2px; }
.palette i { border: 1px solid #2d3142; box-shadow: inset 0 0 0 1px #b9bcc6; }
.c-black { background: #000; } .c-grey { background: #7f7f7f; } .c-maroon { background: #880015; } .c-red { background: #ed1c24; }
.c-orange { background: #ff7f27; } .c-yellow { background: #fff200; } .c-green { background: #22b14c; } .c-sky { background: #00a2e8; }
.c-blue { background: #3f48cc; } .c-purple { background: #a349a4; } .c-white { background: #fff; } .c-silver { background: #c3c3c3; }
.c-brown { background: #b97a57; } .c-pink { background: #ffaec9; } .c-gold { background: #ffc90e; } .c-cream { background: #efe4b0; }
.c-lime { background: #b5e61d; } .c-aqua { background: #99d9ea; } .c-steel { background: #7092be; } .c-lilac { background: #c8bfe7; }

/* Canvas area */
.work { flex: 1; min-height: 0; display: flex; }
.stage { flex: 1; min-width: 0; overflow: hidden; padding: 4px 0 0 4px; background: linear-gradient(#c5cee0, #dce6f3); }
.paper { position: relative; width: 1229px; height: 1530px; background: #fff; box-shadow: 4px 4px 4px #a9b8ce; }
.art { width: 1152px; font-family: Roboto, sans-serif; font-size: 14px; line-height: 17px; }
.dark { height: 428px; padding: 14px 166px 0 167px; background: #1f2937; color: #e5e7eb; }
.site-head { display: flex; justify-content: space-between; align-items: baseline; height: 50px; }
.site-head strong { font-size: 19px; line-height: 22px; color: #f9faf8; }
.site-head nav { display: flex; gap: 23px; }
.hero { display: flex; justify-content: space-between; align-items: center; padding-top: 68px; }
.copy { width: 365px; }
.copy h2 { font-size: 38px; line-height: 45px; font-weight: 900; color: #f9faf8; }
.copy button { width: 104px; height: 30px; margin-top: 10px; border-radius: 6px; background: #3b82f6; color: #fff; font-weight: 700; }
.ph { display: flex; align-items: center; justify-content: center; width: 418px; height: 190px; padding-top: 10px; background: #6d747e; color: #fff; }
.info { height: 399px; padding-top: 38px; color: #4b5563; text-align: center; }
.info h2 { font-size: 29px; line-height: 34px; font-weight: 900; color: #1f2937; }
.cards { display: flex; justify-content: center; gap: 40px; padding-top: 38px; }
.cards figure { width: 134px; }
.box { height: 135px; margin-bottom: 6px; border: 3px solid #3b82f6; border-radius: 14px; }
.quote { height: 400px; background: #e5e7eb; }

/* Rectangles drawn over the picture */
.mark { position: absolute; border: 6px solid; }
.yellow { color: #fff200; } .green { color: #22b14c; } .red { color: #ed1c24; } .blue { color: #3f48cc; }
.m-head { left: 0; top: 0; width: 1160px; height: 64px; }
.m-logo { left: 145px; top: 4px; width: 143px; height: 49px; }
.m-nav { left: 625px; top: 2px; width: 403px; height: 53px; }
.m-hero { left: 32px; top: 80px; width: 1086px; height: 324px; }
.m-row { left: 108px; top: 114px; width: 936px; height: 262px; }
.m-copy { left: 135px; top: 126px; width: 406px; height: 234px; }
.m-title { left: 153px; top: 139px; width: 380px; height: 86px; }
.m-sub { left: 153px; top: 224px; width: 377px; height: 64px; }
.m-btn { left: 157px; top: 284px; width: 148px; height: 66px; }
.handle { position: absolute; left: 1229px; top: 763px; width: 4px; height: 4px; background: #222; }
.vscroll { display: flex; flex-direction: column; align-items: center; width: 15px; padding: 3px 0; background: #f0f0f0; }
.track { flex: 1; width: 11px; padding-top: 2px; }
.thumb { height: 58%; background: #cdcdcd; }

.status { display: flex; align-items: center; height: 21px; padding-right: 2px; background: #efefef; border-top: 1px solid #d9dce0; border-bottom: 2px solid #fff; font-size: 10px; color: #222; }
.cell { display: flex; align-items: center; gap: 5px; width: 125px; height: 18px; padding-left: 4px; border-right: 1px solid #d8d8d8; }
.pct { margin-left: auto; width: 32px; height: 18px; padding: 1px 0 0 9px; background: #171a2a; color: #ddd; font-size: 9px; line-height: 16px; }
.zoom { display: flex; align-items: center; justify-content: space-between; width: 116px; height: 18px; margin-left: 3px; padding: 0 3px; background: #171a2a; }
.zoom button { width: 12px; height: 12px; border-radius: 50%; background: #eee; color: #222; font-weight: 700; line-height: 12px; }
.zoom input { appearance: none; width: 68px; height: 14px; margin: 0; background: none; }
.zoom input::-webkit-slider-runnable-track { height: 4px; background: #eee; }
.zoom input::-webkit-slider-thumb { appearance: none; width: 8px; height: 13px; margin-top: -5px; background: #0f7bdc; clip-path: polygon(0 0, 100% 0, 100% 75%, 50% 100%, 0 75%); }
.grip { width: 8px; height: 8px; margin: 6px 0 0 6px; }

.hscroll { flex: none; display: flex; height: 6px; padding-right: 13px; background: #dcdcdc; }
.hdark, .hdark2 { flex: 442; background: #0b0b0d; }
.hthumb { flex: 1152; background: #b9b9bb; }

/* Taskbar */
.taskbar { flex: none; display: flex; height: 32px; background: linear-gradient(90deg, #22373f, #20333e 50%, #1b2a40 80%, #1a2640); color: #f2f2f2; font-size: 11px; }
.start { width: 39px; }
.search { display: flex; align-items: center; gap: 8px; width: 275px; padding-left: 9px; background: #333; border: 1px solid #58595b; }
.search input { flex: 1; min-width: 0; border: 0; outline: 0; padding: 0; background: none; font: inherit; color: #ccc; }
.search input::placeholder { color: #d0d0d0; opacity: 1; }
.apps { display: flex; width: 549px; }
.apps button { flex: 1; border-bottom: 2px solid transparent; }
.apps .on { background: linear-gradient(#7a82c4, #7a82c4) center bottom / 32px 2px no-repeat border-box; }
.apps .current { background: #4b5b66; border-bottom-color: #8088cc; }
.adobe { width: 17px; height: 17px; border-radius: 3px; font-size: 9px; line-height: 15px; font-weight: 700; }
.pr { background: #2a0634; border: 1px solid #d65cf0; border-radius: 1px; color: #d89cf5; }
.ps { background: #001e36; color: #31a8ff; line-height: 17px; }
.tray { margin-left: auto; display: flex; padding-right: 9px; }
.tray button { width: 19px; }
.tray .weather { width: auto; gap: 8px; margin-right: 9px; }
.tray .pen { margin-left: 3px; }
.tray .lang { width: 28px; font-size: 9px; margin-left: 3px; }
.tray .clock { width: 56px; font-size: 10px; }
.tray .notif { width: 24px; position: relative; margin-left: 11px; }
.notif b { position: absolute; right: 0; bottom: 4px; width: 12px; height: 12px; border-radius: 50%; background: #444a55; font-size: 9px; line-height: 12px; }
```
